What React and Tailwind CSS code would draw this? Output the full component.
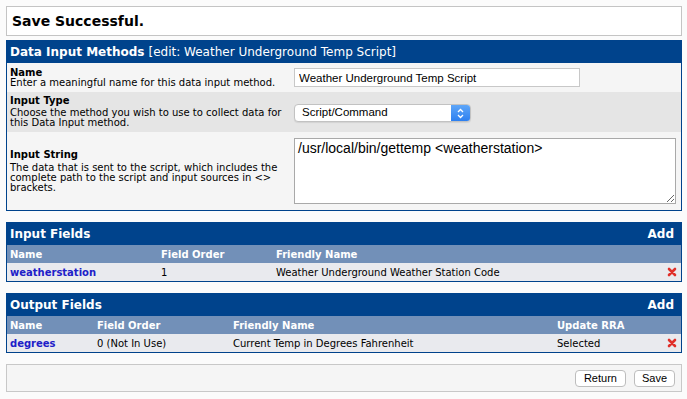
import React from "react";

// Small red delete cross used in the field tables
const DeleteIcon = () => (
  <svg width="10" height="10" viewBox="0 0 10 10">
    <path d="M2 2 L8 8 M8 2 L2 8" stroke="#e0302a" strokeWidth="2.6" strokeLinecap="round" />
  </svg>
);

const inputFields = [
  { name: "weatherstation", order: "1", friendly: "Weather Underground Weather Station Code" },
];

const outputFields = [
  { name: "degrees", order: "0 (Not In Use)", friendly: "Current Temp in Degrees Fahrenheit", rra: "Selected" },
];

const App = () => {
  return (
    <div className="min-h-screen bg-[#fbfbfb] pl-[6px] pr-[5px] pt-[6px] font-['DejaVu_Sans',sans-serif] text-[10px] text-black">
      {/* Save message */}
      <div className="h-[30px] border border-[#c4c4c4] bg-white flex items-center pl-[5px]">
        <span className="text-[14px] font-bold">Save Successful.</span>
      </div>

      {/* Data Input Methods */}
      <div className="mt-[4px] border border-[#00438c]">
        <div className="h-[22px] bg-[#00438c] text-white flex items-center pl-[3px] text-[12px]">
          <span className="font-bold">Data Input Methods</span>
          <span className="ml-[4px]">[edit: Weather Underground Temp Script]</span>
        </div>
        <div className="h-[29px] bg-[#f5f5f5] flex items-center">
          <div className="w-[287px] pl-[3px] leading-[10px]">
            <div className="font-bold">Name</div>
            <div>Enter a meaningful name for this data input method.</div>
          </div>
          <input
            readOnly
            value="Weather Underground Temp Script"
            className="h-[19px] w-[286px] border border-[#c8c8c8] bg-white px-[4px] font-['Liberation_Sans',sans-serif] text-[11.5px] outline-none"
          />
        </div>
        <div className="h-[40px] bg-[#e5e5e5] flex items-center">
          <div className="w-[287px] pl-[3px] leading-[10px]">
            <div className="font-bold mb-[2px]">Input Type</div>
            <div>Choose the method you wish to use to collect data for this Data Input method.</div>
          </div>
          <div className="mt-[2px] h-[18px] w-[177px] flex rounded-[4px] border border-[#c2c2c2] bg-white shadow-[0_1px_1px_rgba(0,0,0,0.08)] overflow-hidden">
            <span className="flex-1 pl-[7px] flex items-center font-['Liberation_Sans',sans-serif] text-[11.5px]">Script/Command</span>
            <span className="w-[19px] bg-gradient-to-b from-[#5ea6f8] to-[#2c7ff0] flex items-center justify-center">
              <svg width="7" height="11" viewBox="0 0 7 11">
                <path d="M1 4 L3.5 1.5 L6 4 M1 7 L3.5 9.5 L6 7" stroke="white" strokeWidth="1.3" fill="none" />
              </svg>
            </span>
          </div>
        </div>
        <div className="h-[78px] bg-[#f5f5f5] flex items-center">
          <div className="w-[287px] pl-[3px] leading-[10px]">
            <div className="font-bold mb-[3px]">Input String</div>
            <div>The data that is sent to the script, which includes the complete path to the script and input sources in &lt;&gt; brackets.</div>
          </div>
          <textarea
            readOnly
            value="/usr/local/bin/gettemp <weatherstation>"
            className="h-[66px] w-[382px] border border-[#a9a9a9] bg-white px-[3px] py-[1px] font-['Liberation_Sans',sans-serif] text-[14px] leading-[17px] outline-none"
          />
        </div>
      </div>

      {/* Input Fields */}
      <div className="mt-[11px] border border-[#00438c]">
        <div className="h-[22px] bg-[#00438c] text-white text-[12px] font-bold flex items-center justify-between pl-[3px] pr-[7px]">
          <span>Input Fields</span>
          <span>Add</span>
        </div>
        <div className="h-[18px] bg-[#7290b8] text-white font-bold flex items-center pl-[3px]">
          <span className="w-[151px]">Name</span>
          <span className="w-[115px]">Field Order</span>
          <span>Friendly Name</span>
        </div>
        {inputFields.map((f) => (
          <div key={f.name} className="h-[18px] bg-[#e9eaee] flex items-center pl-[3px] pr-[4px]">
            <span className="w-[151px] font-bold text-[#2020c8]">{f.name}</span>
            <span className="w-[115px]">{f.order}</span>
            <span className="flex-1">{f.friendly}</span>
            <DeleteIcon />
          </div>
        ))}
      </div>

      {/* Output Fields */}
      <div className="mt-[11px] border border-[#00438c]">
        <div className="h-[22px] bg-[#00438c] text-white text-[12px] font-bold flex items-center justify-between pl-[3px] pr-[7px]">
          <span>Output Fields</span>
          <span>Add</span>
        </div>
        <div className="h-[18px] bg-[#7290b8] text-white font-bold flex items-center pl-[3px]">
          <span className="w-[87px]">Name</span>
          <span className="w-[136px]">Field Order</span>
          <span className="w-[324px]">Friendly Name</span>
          <span>Update RRA</span>
        </div>
        {outputFields.map((f) => (
          <div key={f.name} className="h-[18px] bg-[#e9eaee] flex items-center pl-[3px] pr-[4px]">
            <span className="w-[87px] font-bold text-[#2020c8]">{f.name}</span>
            <span className="w-[136px]">{f.order}</span>
            <span className="w-[324px]">{f.friendly}</span>
            <span className="flex-1">{f.rra}</span>
            <DeleteIcon />
          </div>
        ))}
      </div>

      {/* Buttons */}
      <div className="mt-[11px] h-[28px] border border-[#c8c8c8] bg-[#f5f5f5] flex items-center justify-end gap-[8px] pr-[6px]">
        <button className="h-[17px] px-[8px] rounded-[4px] border border-[#bdbdbd] bg-white font-['Liberation_Sans',sans-serif] text-[11px] leading-none">Return</button>
        <button className="h-[17px] px-[7px] rounded-[4px] border border-[#bdbdbd] bg-white font-['Liberation_Sans',sans-serif] text-[11px] leading-none">Save</button>
      </div>
    </div>
  );
};

export default App;
